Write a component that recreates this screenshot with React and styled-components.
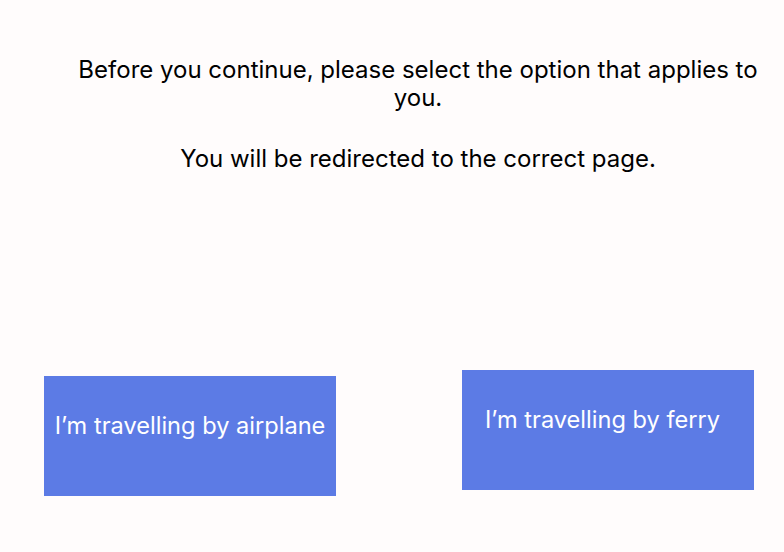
import React from "react";
import styled, { createGlobalStyle } from "styled-components";

const GlobalStyle = createGlobalStyle`
  body {
    margin: 0;
    background-color: #fffcfc;
    font-family: Inter, "Liberation Sans", sans-serif;
  }
`;

const Page = styled.div`
  width: 784px;
  height: 552px;
  display: flex;
  flex-direction: column;
  background-color: #fffcfc;
`;

const Intro = styled.div`
  margin: 56px 24px 0 76px;
  text-align: center;
  color: #000;
  font-size: 24px;
  line-height: 28px;
`;

const Line = styled.p`
  margin: 0 0 ${(props) => props.$gap || 0}px;
`;

const Choices = styled.div`
  display: flex;
  justify-content: space-between;
  align-items: flex-start;
  margin-top: 197px;
  padding: 0 30px 0 44px;
`;

const Choice = styled.button`
  width: 292px;
  height: 120px;
  margin-top: ${(props) => props.$offset || 0}px;
  padding: 36px ${(props) => props.$inset || 0}px 0;
  display: flex;
  align-items: flex-start;
  justify-content: ${(props) => (props.$inset ? "flex-start" : "center")};
  border: none;
  background-color: #5c7be5;
  color: #fff;
  font-family: Inter, "Liberation Sans", sans-serif;
  font-size: 23.6px;
  line-height: 28px;
  white-space: nowrap;
  cursor: pointer;
`;

function App() {
  return (
    <Page>
      <GlobalStyle />
      <Intro>
        <Line $gap={33}>
          Before you continue, please select the option that applies to you.
        </Line>
        <Line>You will be redirected to the correct page.</Line>
      </Intro>
      <Choices>
        <Choice $offset={6}>I’m travelling by airplane</Choice>
        <Choice $inset={23}>I’m travelling by ferry</Choice>
      </Choices>
    </Page>
  );
}

export default App;
